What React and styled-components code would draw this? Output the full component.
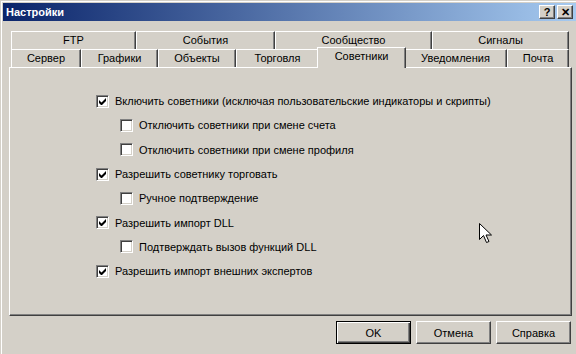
import styled, { createGlobalStyle } from "styled-components";

const GlobalStyle = createGlobalStyle`
  html, body {
    margin: 0;
    padding: 0;
    background: #d4d0c8;
  }
  body {
    font-family: "Liberation Sans", Arial, sans-serif;
    font-size: 11px;
    color: #000;
  }
`;

const Window = styled.div`
  position: relative;
  width: 576px;
  height: 354px;
  box-sizing: border-box;
  border-top: 1px solid #d4d0c8;
  border-left: 1px solid #d4d0c8;
  background: #d4d0c8;
  overflow: hidden;
`;

const Frame = styled.div`
  height: 100%;
  box-sizing: border-box;
  border-top: 1px solid #fff;
  border-left: 1px solid #fff;
  padding: 1px 0 0 1px;
  display: flex;
  flex-direction: column;
`;

const TitleBar = styled.div`
  height: 18px;
  display: flex;
  align-items: center;
  justify-content: space-between;
  padding: 0 3px 0 3px;
  background: linear-gradient(to right, #0a246a, #a6caf0);
`;

const TitleText = styled.span`
  color: #fff;
  font-weight: bold;
  font-size: 11px;
`;

const CaptionButtons = styled.div`
  display: flex;
  gap: 2px;
`;

const CaptionButton = styled.div`
  width: 16px;
  height: 14px;
  box-sizing: border-box;
  background: #d4d0c8;
  border: 1px solid;
  border-color: #fff #404040 #404040 #fff;
  box-shadow: inset -1px -1px #808080;
  display: flex;
  align-items: center;
  justify-content: center;
  font-weight: bold;
  font-size: 11px;
  line-height: 1;
`;

const Body = styled.div`
  flex: 1;
  display: flex;
  flex-direction: column;
  padding: 10px 0 0 6px;
`;

const TabRow = styled.div`
  display: flex;
  align-items: flex-end;
  margin-left: 2px;
  width: 558px;
  height: ${(p) => (p.$front ? 20 : 18)}px;
  margin-top: ${(p) => (p.$front ? -2 : 0)}px;
`;

const Tab = styled.div`
  position: relative;
  box-sizing: border-box;
  width: ${(p) => p.$w}px;
  height: ${(p) => (p.$active ? 21 : 18)}px;
  margin: ${(p) => (p.$active ? "0 -2px -1px -2px" : "0")};
  z-index: ${(p) => (p.$active ? 2 : 1)};
  flex: none;
  background: #d4d0c8;
  border-top: 1px solid #fff;
  border-left: 1px solid #fff;
  border-right: 1px solid #404040;
  box-shadow: inset -1px 0 #808080;
  display: flex;
  justify-content: center;
  padding-top: 2px;
  white-space: nowrap;
`;

const Panel = styled.div`
  box-sizing: border-box;
  width: 563px;
  height: 249px;
  border-top: 1px solid #fff;
  border-left: 1px solid #fff;
  border-right: 1px solid #404040;
  border-bottom: 1px solid #404040;
  box-shadow: inset -1px -1px #808080;
  padding: 21px 0 0 86px;
  display: flex;
  flex-direction: column;
`;

const OptionRow = styled.div`
  display: flex;
  align-items: center;
  height: 24.3px;
  padding-left: ${(p) => (p.$indent ? 24 : 0)}px;
  white-space: nowrap;
`;

const Box = styled.span`
  width: 13px;
  height: 13px;
  box-sizing: border-box;
  flex: none;
  margin-right: 6px;
  background: #fff;
  border: 1px solid;
  border-color: #808080 #fff #fff #808080;
  box-shadow: inset 1px 1px #404040, inset -1px -1px #d4d0c8;
  display: flex;
  align-items: center;
  justify-content: center;
`;

const Footer = styled.div`
  display: flex;
  justify-content: flex-end;
  gap: 5px;
  width: 563px;
  padding-top: 5px;
  box-sizing: border-box;
  padding-right: 1px;
`;

const Button = styled.div`
  width: 75px;
  height: 23px;
  box-sizing: border-box;
  background: #d4d0c8;
  border: 1px solid;
  border-color: ${(p) => (p.$default ? "#000" : "#fff #404040 #404040 #fff")};
  box-shadow: ${(p) =>
    p.$default
      ? "inset 1px 1px #fff, inset -1px -1px #404040, inset -2px -2px #808080"
      : "inset -1px -1px #808080"};
  display: flex;
  align-items: center;
  justify-content: center;
`;

const Cursor = styled.svg`
  position: absolute;
  left: 478px;
  top: 222px;
`;

const Check = () => (
  <svg width="7" height="7" viewBox="0 0 7 7">
    <path d="M0 2v3l2 2h1l4-4V0L2.5 4.5z" fill="#000" />
  </svg>
);

const backTabs = [
  ["FTP", 125],
  ["События", 139],
  ["Сообщество", 157],
  ["Сигналы", 137],
];

const frontTabs = [
  ["Сервер", 70],
  ["Графики", 77],
  ["Объекты", 78],
  ["Торговля", 83],
  ["Советники", 89, true],
  ["Уведомления", 103],
  ["Почта", 62],
];

const options = [
  ["Включить советники (исключая пользовательские индикаторы и скрипты)", true, false],
  ["Отключить советники при смене счета", false, true],
  ["Отключить советники при смене профиля", false, true],
  ["Разрешить советнику торговать", true, false],
  ["Ручное подтверждение", false, true],
  ["Разрешить импорт DLL", true, false],
  ["Подтверждать вызов функций DLL", false, true],
  ["Разрешить импорт внешних экспертов", true, false],
];

export default function App() {
  return (
    <>
      <GlobalStyle />
      <Window>
        <Frame>
          <TitleBar>
            <TitleText>Настройки</TitleText>
            <CaptionButtons>
              <CaptionButton>?</CaptionButton>
              <CaptionButton>✕</CaptionButton>
            </CaptionButtons>
          </TitleBar>
          <Body>
            <TabRow>
              {backTabs.map(([name, w]) => (
                <Tab key={name} $w={w}>{name}</Tab>
              ))}
            </TabRow>
            <TabRow $front>
              {frontTabs.map(([name, w, active]) => (
                <Tab key={name} $w={w} $active={active}>{name}</Tab>
              ))}
            </TabRow>
            <Panel>
              {options.map(([label, checked, indent]) => (
                <OptionRow key={label} $indent={indent}>
                  <Box>{checked && <Check />}</Box>
                  {label}
                </OptionRow>
              ))}
            </Panel>
            <Footer>
              <Button $default>OK</Button>
              <Button>Отмена</Button>
              <Button>Справка</Button>
            </Footer>
          </Body>
        </Frame>
        <Cursor width="13" height="21" viewBox="0 0 13 21">
          <path
            d="M0.5 0.5v16l4-4 3 7 2.5-1-3-6.5h5.5z"
            fill="#fff"
            stroke="#000"
            strokeWidth="1"
          />
        </Cursor>
      </Window>
    </>
  );
}
